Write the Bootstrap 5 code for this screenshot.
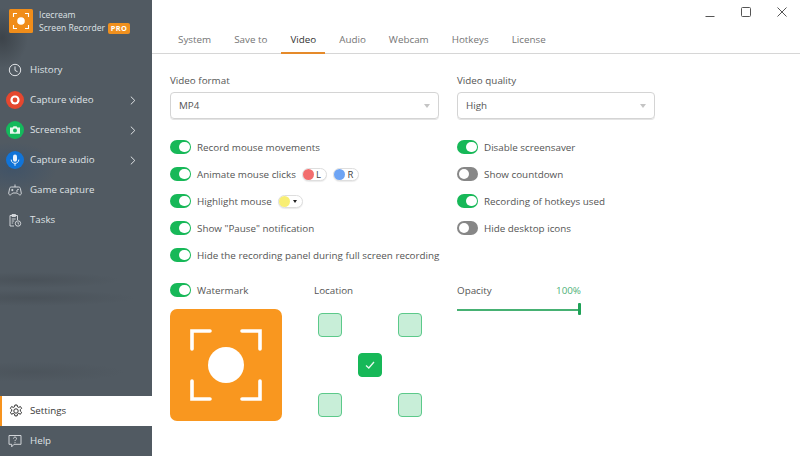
<!DOCTYPE html>
<html lang="en">
<head>
<meta charset="utf-8">
<title>Icecream Screen Recorder</title>
<link href="https://cdn.jsdelivr.net/npm/bootstrap@5.3.0/dist/css/bootstrap.min.css" rel="stylesheet">
<style>
html,body{height:100%;margin:0;overflow:hidden;background:#fff}
body{font-family:"Open Sans","Noto Sans","Liberation Sans",sans-serif;font-size:9.83px;color:#555}
.app-shell{width:800px;height:456px}
.side-bar{width:152px;flex:none;color:#dfe2e5;font-size:9.75px;
 background:
 radial-gradient(ellipse 26px 30px at 2px 38px,rgba(40,45,50,.5),transparent),
 radial-gradient(ellipse 45px 26px at 12px 168px,rgba(45,75,110,.45),transparent),
 radial-gradient(ellipse 90px 8px at 30px 280px,rgba(60,66,72,.35),transparent),
 radial-gradient(ellipse 105px 8px at 30px 298px,rgba(60,66,72,.35),transparent),
 radial-gradient(ellipse 95px 10px at 30px 372px,rgba(60,66,72,.25),transparent),
 #515a62}
.brand-row{height:55px;padding:9px 0 0 9px;gap:6px}
.brand-logo{width:24px;height:24px;flex:none}
.brand-text{line-height:13px;font-size:8.6px;margin-top:-.5px;white-space:nowrap}
.pro-tag{display:inline-block;background:#f0901e;color:#fff;font-weight:700;font-size:7.4px;line-height:11px;border-radius:2px;padding:0 2.5px;margin-left:1px;letter-spacing:.3px}
.side-item{height:30px;display:flex;align-items:center;padding-right:16px;white-space:nowrap}
.side-ico{width:30px;flex:none;display:flex;justify-content:center}
.side-ico svg{display:block}
.side-lab{flex:1}
.side-sp{flex:1}
.side-item.on{background:#fff;color:#3a3a3a;border-left:2px solid #f7931e}
.side-item.on .side-ico{width:28px}
.content-area{min-width:0}
.title-strip{height:24px}
.win-btn{width:36px;height:24px;display:flex;align-items:center;justify-content:center}
.tab-strip{height:29.5px;border-bottom:1px solid #d6d6d6;padding-left:17px}
.tab-cell{height:29.5px;display:flex;align-items:center;padding:4px 9px 0;color:#757575;margin-right:5px;margin-bottom:-1px;border-bottom:2px solid transparent}
.tab-cell.cur{color:#333;border-bottom:2px solid #e58a2a}
.form-body{padding:19px 0 0 18px}
.two-cols{display:grid;grid-template-columns:287px 200px}
.fld-label{line-height:14px;margin-bottom:5px}
.drop-box{height:27px;border:1px solid #d4d4d4;border-radius:4px;display:flex;align-items:center;justify-content:space-between;padding:1px 8px 0;box-shadow:0 1px 0 #e4e4e4}
.drop-caret{width:0;height:0;border-left:3px solid transparent;border-right:3px solid transparent;border-top:4px solid #c4c4c4}
.drop-wide{width:269px}
.drop-mid{width:198px}
.opts-wrap{margin-top:15px}
.opt-row{height:27px;display:flex;align-items:center;gap:6px;white-space:nowrap;padding-top:1px}
.sw-pill{width:21px;height:13.5px;border-radius:7px;background:#17b858;flex:none;display:flex;align-items:center;justify-content:flex-end;padding:0 1.5px;margin-top:-1px}
.sw-pill::after{content:"";width:10.5px;height:10.5px;background:#fff;border-radius:50%}
.sw-pill.off{background:#878787;justify-content:flex-start}
.click-chip{display:inline-flex;align-items:center;width:25.5px;height:13px;border:1px solid #dedede;border-radius:7px;background:#fff;font-size:9.5px;color:#444;line-height:1;gap:2px;box-shadow:0 1px 1px #ececec}
.click-dot{width:11px;height:11px;border-radius:50%;display:block}
.chip-row{gap:6px}
.tri-down{width:0;height:0;border-left:2.5px solid transparent;border-right:2.5px solid transparent;border-top:3.5px solid #222;margin-left:1px}
.lower-grid{display:grid;grid-template-columns:144px 143px 124px}
.low-head{height:19px;margin-top:12px;display:flex;align-items:center;gap:6px;padding-top:1px}
.wm-box{width:112px;height:112px;background:#f9971f;border-radius:7px;margin-top:9px}
.wm-box svg{display:block}
.loc-grid{display:grid;grid-template-columns:repeat(3,24px);grid-auto-rows:24px;gap:16px;margin:13px 0 0 4px}
.loc-cell{border:1px solid #5cc98a;background:#c8eed8;border-radius:4px}
.loc-cell.sel{background:#17b858;border-color:#17b858;display:flex;align-items:center;justify-content:center}
.op-val{color:#4fb27a}
.slide-line{height:2px;background:#46b173;margin-top:9px;position:relative;width:124px}
.slide-knob{position:absolute;right:0;top:-5.5px;width:3px;height:12px;background:#1fa257;border-radius:1px}
.op-head{justify-content:space-between}
</style>
</head>
<body>
<div class="app-shell d-flex">
  <nav class="side-bar d-flex flex-column">
    <div class="brand-row d-flex">
      <svg class="brand-logo" viewBox="0 0 24 24"><rect width="24" height="24" rx="1.5" fill="#f08d1a"/><circle cx="12" cy="12" r="3.8" fill="#fff"/><path d="M4.5 8V4.5H8M16 4.5h3.5V8M19.5 16v3.5H16M8 19.5H4.5V16" fill="none" stroke="#fff" stroke-width="1.1"/></svg>
      <div class="brand-text">Icecream<br>Screen Recorder <span class="pro-tag">PRO</span></div>
    </div>
    <div>
      <div class="side-item"><span class="side-ico"><svg width="14" height="14" viewBox="0 0 14 14" fill="none" stroke="#dfe2e5" stroke-width="1"><circle cx="7" cy="7" r="5.7"/><path d="M7 3.4V7.4L9.6 8.8"/></svg></span><span class="side-lab">History</span></div>
      <div class="side-item"><span class="side-ico"><svg width="18" height="18" viewBox="0 0 18 18"><circle cx="9" cy="9" r="9" fill="#e5472f"/><circle cx="9" cy="9" r="4.6" fill="#fff"/><circle cx="9" cy="9" r="2.4" fill="#e5472f"/></svg></span><span class="side-lab">Capture video</span><svg width="6" height="9" viewBox="0 0 6 9" fill="none" stroke="#dfe2e5" stroke-width="1"><path d="M.8.600 4.800 4.500 .8 8.400"/></svg></div>
      <div class="side-item"><span class="side-ico"><svg width="18" height="18" viewBox="0 0 18 18"><circle cx="9" cy="9" r="9" fill="#14b95c"/><path d="M4 6.500h2.600l.9-1.300h3l.9 1.300H14v6.300H4z" fill="#e8f8ee"/><circle cx="9" cy="9.600" r="2" fill="#14b95c"/></svg></span><span class="side-lab">Screenshot</span><svg width="6" height="9" viewBox="0 0 6 9" fill="none" stroke="#dfe2e5" stroke-width="1"><path d="M.8.600 4.800 4.500 .8 8.400"/></svg></div>
      <div class="side-item"><span class="side-ico"><svg width="18" height="18" viewBox="0 0 18 18"><circle cx="9" cy="9" r="9" fill="#1174d8"/><rect x="7" y="3.400" width="4" height="7.400" rx="2" fill="#eaf3fc"/><path d="M5.200 8.600c0 5 7.600 5 7.600 0M9 12.400v2.400" fill="none" stroke="#eaf3fc" stroke-width="1"/></svg></span><span class="side-lab">Capture audio</span><svg width="6" height="9" viewBox="0 0 6 9" fill="none" stroke="#dfe2e5" stroke-width="1"><path d="M.8.600 4.800 4.500 .8 8.400"/></svg></div>
      <div class="side-item"><span class="side-ico"><svg width="14" height="14" viewBox="0 0 14 14" fill="none" stroke="#dfe2e5" stroke-width=".9"><path d="M3.300 4h7.400c1 0 1.500.6 1.700 1.500l.9 4.700c.2 1.700-1.700 2.300-2.700 1.100L9.300 10H4.700l-1.300 1.300C2.400 12.500.5 11.900.7 10.200l.9-4.700C1.800 4.600 2.300 4 3.300 4zM7 4V1.500M3.200 7h2.200M4.300 5.900v2.200"/><circle cx="10" cy="6.400" r=".4"/><circle cx="9" cy="8" r=".4"/></svg></span><span class="side-lab">Game capture</span></div>
      <div class="side-item"><span class="side-ico"><svg width="14" height="14" viewBox="0 0 14 14" fill="none" stroke="#dfe2e5" stroke-width=".9"><path d="M6 13H2V2.500h7.500v4.500M4 1.500h3.500v2H4zM3.700 6h4M3.700 8h2.500M3.700 10h1.500"/><circle cx="10" cy="10.500" r="2.700"/><path d="M10 9.200v1.400l1 .6"/></svg></span><span class="side-lab">Tasks</span></div>
    </div>
    <div class="side-sp"></div>
    <div class="side-item on"><span class="side-ico"><svg width="14" height="14" viewBox="0 0 14 14" fill="none" stroke="#333" stroke-width="1"><path d="M5.900 1h2.200l.4 1.800 1.300.6 1.600-.9 1.200 1.800-1.300 1.300v1.500l1.300 1.200-1.200 2-1.600-.9-1.300.7-.4 1.800H5.900l-.4-1.800-1.300-.7-1.600.9-1.200-2 1.300-1.200V5.600L1.400 4.300l1.200-1.800 1.600.9 1.300-.6z"/><circle cx="7" cy="7" r="2.200"/></svg></span><span class="side-lab">Settings</span></div>
    <div class="side-item"><span class="side-ico"><svg width="14" height="14" viewBox="0 0 14 14" fill="none" stroke="#dfe2e5" stroke-width=".9"><path d="M1 1.500h12v8.800H6L3.700 12.800v-2.500H1z"/><path d="M5.500 4.600c0-2 3-2 3 0 0 1.200-1.500 1.200-1.500 2.500M7 8.200v.8"/></svg></span><span class="side-lab">Help</span></div>
  </nav>
  <main class="content-area flex-grow-1 d-flex flex-column">
    <div class="title-strip d-flex justify-content-end">
      <div class="win-btn"><svg width="10" height="10" viewBox="0 0 10 10"><path d="M.5 9.500h9" stroke="#555" stroke-width="1"/></svg></div>
      <div class="win-btn"><svg width="10" height="10" viewBox="0 0 10 10" fill="none" stroke="#555"><rect x=".5" y=".5" width="9" height="9" rx="1"/></svg></div>
      <div class="win-btn"><svg width="10" height="10" viewBox="0 0 10 10" fill="none" stroke="#555"><path d="M.5.500l9 9M9.500.500l-9 9"/></svg></div>
    </div>
    <div class="tab-strip d-flex">
      <div class="tab-cell">System</div><div class="tab-cell">Save to</div><div class="tab-cell cur">Video</div><div class="tab-cell">Audio</div><div class="tab-cell">Webcam</div><div class="tab-cell">Hotkeys</div><div class="tab-cell">License</div>
    </div>
    <div class="form-body">
      <div class="two-cols">
        <div><div class="fld-label">Video format</div><div class="drop-box drop-wide"><span>MP4</span><span class="drop-caret"></span></div></div>
        <div><div class="fld-label">Video quality</div><div class="drop-box drop-mid"><span>High</span><span class="drop-caret"></span></div></div>
      </div>
      <div class="two-cols opts-wrap">
        <div>
          <div class="opt-row"><span class="sw-pill"></span>Record mouse movements</div>
          <div class="opt-row"><span class="sw-pill"></span>Animate mouse clicks
            <span class="d-inline-flex chip-row"><span class="click-chip"><span class="click-dot" style="background:#f26d6d"></span>L</span><span class="click-chip"><span class="click-dot" style="background:#6ea4f4"></span>R</span></span></div>
          <div class="opt-row"><span class="sw-pill"></span>Highlight mouse
            <span class="click-chip"><span class="click-dot" style="background:#f8ee74"></span><span class="tri-down"></span></span></div>
          <div class="opt-row"><span class="sw-pill"></span>Show "Pause" notification</div>
          <div class="opt-row"><span class="sw-pill"></span>Hide the recording panel during full screen recording</div>
        </div>
        <div>
          <div class="opt-row"><span class="sw-pill"></span>Disable screensaver</div>
          <div class="opt-row"><span class="sw-pill off"></span>Show countdown</div>
          <div class="opt-row"><span class="sw-pill"></span>Recording of hotkeys used</div>
          <div class="opt-row"><span class="sw-pill off"></span>Hide desktop icons</div>
        </div>
      </div>
      <div class="lower-grid">
        <div>
          <div class="low-head"><span class="sw-pill"></span>Watermark</div>
          <div class="wm-box"><svg width="112" height="112" viewBox="0 0 112 112"><circle cx="56" cy="56" r="18" fill="#fff"/><path d="M22 40V22H40M72 22H90V40M90 72V90H72M40 90H22V72" fill="none" stroke="#fff" stroke-width="3.600" stroke-linecap="round" stroke-linejoin="miter"/></svg></div>
        </div>
        <div>
          <div class="low-head">Location</div>
          <div class="loc-grid">
            <div class="loc-cell"></div><div></div><div class="loc-cell"></div>
            <div></div><div class="loc-cell sel"><svg width="12" height="12" viewBox="0 0 12 12" fill="none" stroke="#e9f9ef" stroke-width="1.300"><path d="M2 6.500 4.800 9 10 3"/></svg></div><div></div>
            <div class="loc-cell"></div><div></div><div class="loc-cell"></div>
          </div>
        </div>
        <div>
          <div class="low-head op-head"><span>Opacity</span><span class="op-val">100%</span></div>
          <div class="slide-line"><span class="slide-knob"></span></div>
        </div>
      </div>
    </div>
  </main>
</div>
<script src="https://cdn.jsdelivr.net/npm/bootstrap@5.3.0/dist/js/bootstrap.bundle.min.js"></script>
</body>
</html>
